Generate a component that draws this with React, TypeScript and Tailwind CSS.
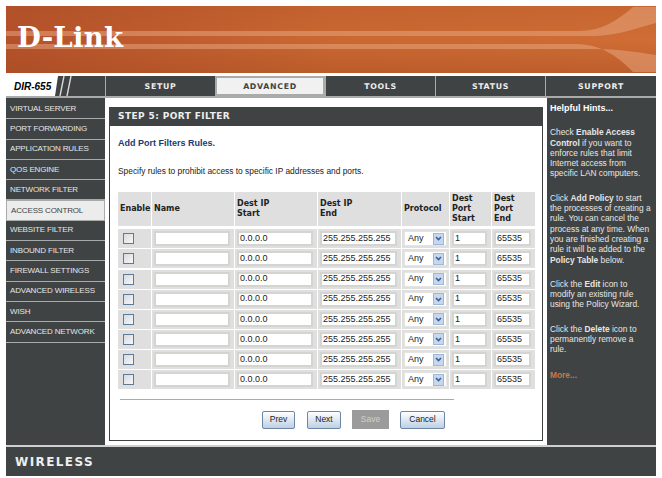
const NAV = ["SETUP", "ADVANCED", "TOOLS", "STATUS"];
const MENU = [
  "VIRTUAL SERVER",
  "PORT FORWARDING",
  "APPLICATION RULES",
  "QOS ENGINE",
  "NETWORK FILTER",
  "ACCESS CONTROL",
  "WEBSITE FILTER",
  "INBOUND FILTER",
  "FIREWALL SETTINGS",
  "ADVANCED WIRELESS",
  "WISH",
  "ADVANCED NETWORK",
];
const ROWS = [0, 1, 2, 3, 4, 5, 6, 7];
const COLS = "grid-cols-[33px_82px_82px_83px_47px_41px_43px]";

function Banner() {
  return (
    <div className="relative h-[67px] overflow-hidden bg-gradient-to-r from-[#b5512b] via-[#cb6832] to-[#d06d35]">
      <div className="absolute inset-0 bg-gradient-to-b from-[#a04a20]/20 via-transparent to-[#a04a20]/40" />
      <svg className="absolute inset-0" width="650" height="67" viewBox="0 0 650 67" fill="none">
        <path d="M0 25 H570 C590 25 605 20 627 1 H650 V17 C630 22 615 29 590 30 H0 Z" fill="#eaa983" fillOpacity="0.5" />
        <path d="M0 38 H570 C592 38 610 48 627 66 H650 V49 C630 46 612 43 590 43 H0 Z" fill="#eaa983" fillOpacity="0.5" />
      </svg>
      <div className="relative pl-[11px] pt-[14px] font-['DejaVu_Serif',serif] text-[27.5px] leading-[34px] font-bold tracking-[0.3px] text-white">
        D-Link
      </div>
    </div>
  );
}

function NavBar() {
  const tab = "flex w-[110px] items-center justify-center pt-px font-['DejaVu_Sans',sans-serif] text-[7.8px] font-bold tracking-[0.7px]";
  return (
    <div className="mt-[3px] flex h-[22px] border-b-2 border-b-[#a9abab] bg-[#404343]">
      <div className="flex w-[99px] items-center">
        <div className="flex h-full w-[46px] shrink-0 items-center bg-white pl-2 font-['Liberation_Sans',sans-serif] text-[10px] font-bold italic whitespace-nowrap text-black">
          DIR-655
        </div>
        <svg width="30" height="20" viewBox="0 0 30 20" fill="none" stroke="#d8d8d8" strokeWidth="1.4">
          <path d="M0 0 H6 L3 20 H0 Z" fill="white" stroke="none" />
          <path d="M8 20 L12 0 M15 20 L19 0" />
        </svg>
      </div>
      {NAV.map((n) => (
        <div
          key={n}
          className={
            n === "ADVANCED"
              ? `${tab} border-2 border-[#a9abab] bg-[#f1f1f1] text-[#404343]`
              : `${tab} border-l border-[#a9abab] text-[#eeeeee]`
          }
        >
          {n}
        </div>
      ))}
      <div className={`${tab} flex-1 border-l border-[#a9abab] text-[#eeeeee]`}>SUPPORT</div>
    </div>
  );
}

function Sidebar() {
  return (
    <div className="w-[99px] shrink-0 bg-[#404343] pt-px font-['Liberation_Sans',sans-serif] text-[8px] tracking-[-0.15px]">
      {MENU.map((m) => (
        <div
          key={m}
          className={
            m === "ACCESS CONTROL"
              ? "flex h-[20.3px] items-center border border-[#a9abab] bg-[#ececec] pl-1 text-[#404343]"
              : "flex h-[20.3px] items-center border-b border-[#a9abab] pl-1 text-[#e6e6e6]"
          }
        >
          {m}
        </div>
      ))}
    </div>
  );
}

function FieldRow() {
  const input = "flex h-[15px] w-full items-center border-2 border-[#d4d4d0] bg-white pl-px text-[9px] text-[#222222]";
  const cell = "flex items-center bg-[#dfdfdf] pl-[2px] pr-[4px]";
  return (
    <div className={`grid ${COLS} h-[19px] gap-px bg-white`}>
      <div className="flex items-center bg-[#dfdfdf] pl-[5px]">
        <div className="h-[11px] w-[11px] border border-[#5e7a94] bg-gradient-to-br from-[#d5dbe2] to-[#f7f7f7]" />
      </div>
      <div className={cell}><div className={input} /></div>
      <div className={cell}><div className={input}>0.0.0.0</div></div>
      <div className={cell}><div className={input}>255.255.255.255</div></div>
      <div className="flex items-center bg-[#dfdfdf] pl-0.5">
        <div className="flex h-[15px] w-[43px] items-center border border-[#e4e4e0] bg-white pl-[3px] text-[9px] text-[#222222]">
          <span className="w-[25px]">Any</span>
          <div className="flex h-[12px] w-[11px] items-center justify-center border border-[#9db8d8] bg-[#c6d7ee]">
            <svg width="7" height="5" viewBox="0 0 7 5" fill="none" stroke="#3c5f96" strokeWidth="1.6"><path d="M1 1 L3.5 3.5 L6 1" /></svg>
          </div>
        </div>
      </div>
      <div className={cell}><div className={input}>1</div></div>
      <div className={cell}><div className={input}>65535</div></div>
    </div>
  );
}

function PortTable() {
  const head = "flex items-center bg-[#dfdfdf] pl-[2px] font-['DejaVu_Sans',sans-serif] text-[8px] font-bold leading-[10.4px] text-[#222222]";
  return (
    <div className="mt-[15px] flex w-[416px] flex-col gap-[1.15px]">
      <div className={`grid ${COLS} mb-[2px] h-[34px] gap-px bg-white`}>
        <div className={head}>Enable</div>
        <div className={head}>Name</div>
        <div className={head}><span>Dest IP<br />Start</span></div>
        <div className={head}><span>Dest IP<br />End</span></div>
        <div className={head}>Protocol</div>
        <div className={head}><span>Dest<br />Port<br />Start</span></div>
        <div className={head}><span>Dest<br />Port<br />End</span></div>
      </div>
      {ROWS.map((r) => (
        <FieldRow key={r} />
      ))}
    </div>
  );
}

function Buttons() {
  const btn = "flex h-[18px] items-center justify-center rounded-[2px] border border-[#6c86a4] bg-gradient-to-b from-white to-[#bcd0e4] text-[8.5px] text-[#222222]";
  return (
    <div className="mt-[10px] ml-[144px] flex items-center">
      <div className={`${btn} w-[33px]`}>Prev</div>
      <div className={`${btn} ml-[12px] w-[34px] border-[#2f5fa8]`}>Next</div>
      <div className="ml-[11px] flex h-[19px] w-[37px] items-center justify-center bg-[#9b9b9b] text-[8.5px] text-[#d0d0d0]">Save</div>
      <div className={`${btn} ml-[11px] w-[45px]`}>Cancel</div>
    </div>
  );
}

function Hints() {
  return (
    <div className="ml-1 w-[109px] shrink-0 bg-[#404343] pl-[3px] pt-[5px] font-['Liberation_Sans',sans-serif] text-[8.4px] leading-[10.3px] whitespace-nowrap text-[#e6e6e6]">
      <div className="text-[9px] font-bold text-white">Helpful Hints...</div>
      <p className="mt-[14px]">Check <b>Enable Access</b><br /><b>Control</b> if you want to<br />enforce rules that limit<br />Internet access from<br />specific LAN computers.</p>
      <p className="mt-[14px]">Click <b>Add Policy</b> to start<br />the processes of creating a<br />rule. You can cancel the<br />process at any time. When<br />you are finished creating a<br />rule it will be added to the<br /><b>Policy Table</b> below.</p>
      <p className="mt-[14px]">Click the <b>Edit</b> icon to<br />modify an existing rule<br />using the Policy Wizard.</p>
      <p className="mt-[14px]">Click the <b>Delete</b> icon to<br />permanently remove a<br />rule.</p>
      <p className="mt-[15px] font-bold text-[#c4794c]">More...</p>
    </div>
  );
}

export default function App() {
  return (
    <div className="h-[478px] w-[662px] bg-white pl-[6px] pt-[6px]">
      <div className="w-[650px] font-['Liberation_Sans',sans-serif]">
        <Banner />
        <NavBar />
        <div className="flex h-[347px]">
          <Sidebar />
          <div className="mt-[9px] mb-[4px] ml-1 w-[434px] border border-t-0 border-[#404343] bg-white">
            <div className="flex h-[19px] items-center bg-[#404343] pl-2 font-['DejaVu_Sans',sans-serif] text-[9px] font-bold tracking-[0.4px] text-[#eeeeee]">
              STEP 5: PORT FILTER
            </div>
            <div className="pl-[8px] pt-[11px]">
              <div className="text-[9px] font-bold text-[#1c3a72]">Add Port Filters Rules.</div>
              <div className="mt-[14px] text-[8.4px] text-[#222222]">Specify rules to prohibit access to specific IP addresses and ports.</div>
              <PortTable />
              <div className="mt-[10px] ml-[2px] w-[334px] border-t border-[#a9abab]" />
              <Buttons />
            </div>
          </div>
          <Hints />
        </div>
        <div className="flex h-[31px] items-center border-t-2 border-[#d0d0d0] bg-[#404343] pl-[9px] font-['DejaVu_Sans',sans-serif] text-[12px] font-bold tracking-[1.4px] text-[#eeeeee]">
          WIRELESS
        </div>
      </div>
    </div>
  );
}
